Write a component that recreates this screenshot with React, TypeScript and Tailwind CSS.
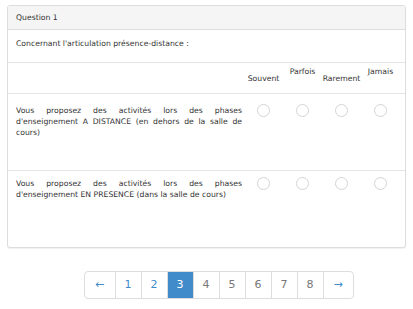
import React from "react";

const columns = [
  { label: "Souvent", low: true },
  { label: "Parfois", low: false },
  { label: "Rarement", low: true },
  { label: "Jamais", low: false },
];

const rows = [
  {
    text: "Vous proposez des activités lors des phases d'enseignement A DISTANCE (en dehors de la salle de cours)",
    pad: "pt-[11px]",
    h: "h-[76px]",
  },
  {
    text: "Vous proposez des activités lors des phases d'enseignement EN PRESENCE (dans la salle de cours)",
    pad: "pt-[7px]",
    h: "h-[77px]",
  },
];

const pages = ["1", "2", "3", "4", "5", "6", "7", "8"];

function Radio() {
  return <span className="block w-[13px] h-[13px] rounded-full border border-[#d4d4d4] bg-white" />;
}

export default function App() {
  return (
    <div className="min-h-[309px] w-[413px] bg-white pt-[5px] px-[7px] text-[#333] font-['DejaVu_Sans','Verdana',sans-serif]">
      {/* question panel */}
      <div className="w-[399px] border border-[#ddd] rounded-[3px] shadow-[0_1px_1px_rgba(0,0,0,0.06)] bg-white overflow-hidden">
        <div className="h-[24px] bg-[#f5f5f5] border-b border-[#ddd] px-[8px] flex items-center text-[7.7px] leading-[11px]">
          Question 1
        </div>
        <div className="px-[8px] pt-[8px] h-[24px] text-[7.7px] leading-[11px]">
          Concernant l'articulation présence-distance :
        </div>

        <div className="mt-[8px] text-[7.7px] leading-[11px]">
          {/* header row */}
          <div className="grid grid-cols-[1fr_39px_39px_39px_39px] pr-[5px] border-y border-[#e5e5e5] h-[32px]">
            <div />
            {columns.map((c) => (
              <div
                key={c.label}
                className={`flex justify-center ${c.low ? "pt-[10px]" : "pt-[3px]"}`}
              >
                {c.label}
              </div>
            ))}
          </div>

          {/* answer rows */}
          {rows.map((r, i) => (
            <div
              key={i}
              className={`grid grid-cols-[1fr_39px_39px_39px_39px] pr-[5px] ${r.h} ${i > 0 ? "border-t border-[#e5e5e5]" : ""}`}
            >
              <div className={`pl-[8px] pr-[2px] ${r.pad} text-justify`}>{r.text}</div>
              {columns.map((c) => (
                <div key={c.label} className={`flex justify-center ${r.pad}`}>
                  <div className="h-[11px] flex items-center">
                    <Radio />
                  </div>
                </div>
              ))}
            </div>
          ))}
        </div>
      </div>

      {/* pagination */}
      <div className="flex justify-center pl-[24px] mt-[23px]">
        <div className="flex border border-[#ddd] rounded-[4px] overflow-hidden text-[11px] h-[28px]">
          <span className="w-[30px] flex items-center justify-center text-[#428bca]">←</span>
          {pages.map((p) => {
            const active = p === "3";
            const link = p === "1" || p === "2";
            return (
              <span
                key={p}
                className={`w-[26px] flex items-center justify-center border-l border-[#ddd] ${
                  active ? "bg-[#428bca] text-white border-[#428bca]" : link ? "text-[#428bca]" : "text-[#777]"
                }`}
              >
                {p}
              </span>
            );
          })}
          <span className="w-[30px] flex items-center justify-center border-l border-[#ddd] text-[#428bca]">→</span>
        </div>
      </div>
    </div>
  );
}
